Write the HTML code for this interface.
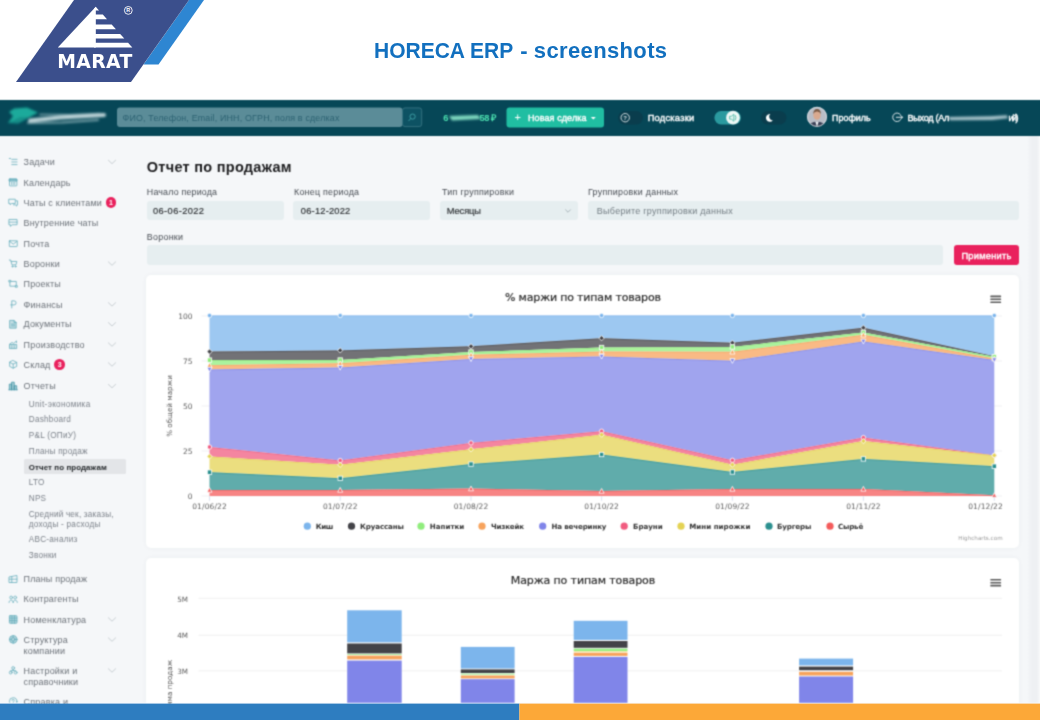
<!DOCTYPE html>
<html lang="ru">
<head>
<meta charset="utf-8">
<title>HORECA ERP - screenshots</title>
<style>
html,body{margin:0;padding:0;}
body{width:1040px;height:720px;overflow:hidden;background:#fff;position:relative;font-family:"Liberation Sans",sans-serif;}
.abs{position:absolute;}
.t{position:absolute;white-space:nowrap;line-height:1;}
.m{display:inline-block;width:0;height:0;}
#app{position:absolute;left:0;top:0;width:1040px;height:720px;filter:url(#soft);}
#shot{position:absolute;left:0;top:100px;width:1040px;height:604px;background:#f5f7f9;overflow:hidden;}
#nav{position:absolute;left:0;top:100px;width:1040px;height:35.5px;background:#064757;}
.card{position:absolute;background:#fff;border-radius:5px;box-shadow:0 0 5px rgba(40,50,70,0.05);}
.inp{position:absolute;background:#e6eef0;border-radius:3px;}
#blue{position:absolute;left:0;top:703px;width:520px;height:17px;background:#2e7dc0;}
#orange{position:absolute;left:520px;top:703px;width:520px;height:17px;background:#fca838;}
</style>
</head>
<body>
<svg width="0" height="0" style="position:absolute"><defs><filter id="soft" x="0" y="0" width="100%" height="100%" color-interpolation-filters="sRGB"><feConvolveMatrix order="3" kernelMatrix="1 3 1 3 9 3 1 3 1" divisor="25" edgeMode="duplicate" preserveAlpha="false"/></filter></defs></svg>
<!-- slide header -->
<svg class="abs" style="left:0;top:0" width="260" height="100" viewBox="0 0 260 100">
  <polygon points="189,0 204,0 158.5,64.5 143.5,64.5" fill="#2e86d2"/>
  <polygon points="74,0 189,0 131,82 16,82" fill="#3b4f8c"/>
  <polygon points="95.8,6.8 95.8,47.4 57.8,47.4" fill="#fff"/>
  <g fill="#fff">
   <polygon points="95.8,6.8 99.0,10.4 94,10.4 94,8.8"/>
   <polygon points="94,14.6 102.8,14.6 107.0,19.3 94,19.3"/>
   <polygon points="94,24.5 111.7,24.5 115.9,29.2 94,29.2"/>
   <polygon points="94,33.9 120.2,33.9 124.3,38.5 94,38.5"/>
   <polygon points="94,42.7 128.1,42.7 132.3,47.4 94,47.4"/>
  </g>
  <circle cx="128.3" cy="10.4" r="3.9" fill="none" stroke="#fff" stroke-width="0.9"/>
  <text x="128.3" y="12.3" font-size="5.4" font-weight="700" fill="#fff" text-anchor="middle" font-family="Liberation Sans, sans-serif">R</text>
</svg>

<div id="app">
<div id="shot"></div>
<div id="nav"></div>
<div class="abs" style="left:1027.5px;top:135.5px;width:11px;height:568px;background:linear-gradient(90deg,#f3f5f7,#eef0f3 40%,#eef0f3 80%,#f4f5f7)"></div>
<div class="abs" style="left:1038.5px;top:135.5px;width:1.5px;height:568px;background:#f8f9fa"></div>

<svg class="abs" style="left:0;top:100px" width="1040" height="36" viewBox="0 100 1040 36">
<defs><filter id="bl" x="-20%" y="-50%" width="140%" height="200%"><feGaussianBlur stdDeviation="1.6"/></filter><filter id="bl2" x="-20%" y="-80%" width="140%" height="260%"><feGaussianBlur stdDeviation="1.1"/></filter><filter id="bl3" x="-20%" y="-100%" width="140%" height="300%"><feGaussianBlur stdDeviation="0.8"/></filter><clipPath id="avc"><circle cx="817" cy="116.8" r="9.6"/></clipPath></defs>
<g filter="url(#bl2)"><path d="M14,108.5 L27,107.5 L38,112.5 L30,117 L20,122 L8,123 L13,116 L9,112 Z" fill="#1fb5a2" opacity="0.9"/><path d="M8,123 L20,117 L30,117 L18,124 Z" fill="#128a86" opacity="0.8"/></g><g filter="url(#bl3)" stroke-linecap="round" fill="none"><path d="M30,120.5 L60,117.5 L104,115" stroke="#dbeaec" stroke-width="4" opacity="0.85"/><path d="M40,114.5 L70,114.8 L100,113.5" stroke="#b5d0d4" stroke-width="1.6" opacity="0.7"/><path d="M28,123 L62,122.6 L98,120" stroke="#a9c9cd" stroke-width="2" opacity="0.7"/></g>
<rect x="117" y="107.5" width="285.5" height="19.5" rx="3" fill="#5b8c98"/>
<rect x="402.5" y="107.9" width="19.2" height="18.7" rx="2.5" fill="#0d5263" stroke="#3d7886" stroke-width="0.8"/>
<circle cx="412.6" cy="116.6" r="2.6" fill="none" stroke="#3fa3a8" stroke-width="0.9"/><path d="M410.7,118.6 L408.8,120.7" stroke="#3fa3a8" stroke-width="0.9" stroke-linecap="round"/>
<g filter="url(#bl2)"><path d="M449,116 L478,115 L481,119 L452,120.5 Z" fill="#7fd9c0"/></g>
<rect x="506.5" y="107.5" width="97.5" height="20" rx="3" fill="#20bea2"/>
<path d="M590.8,116.9 h5 l-2.5,2.6 z" fill="#fff"/>
<rect x="618" y="111" width="25" height="13.4" rx="6.7" fill="#0a3d4d"/>
<circle cx="625.2" cy="117.7" r="4.2" fill="none" stroke="#d5e0e3" stroke-width="1"/>
<text x="625.2" y="119.8" font-size="6" font-weight="700" fill="#d5e0e3" text-anchor="middle" font-family="Liberation Sans, sans-serif">?</text>
<rect x="714.4" y="111" width="26.5" height="13.4" rx="6.7" fill="#2a9a9f"/>
<circle cx="733" cy="117.7" r="6.9" fill="#eef8f6"/>
<path d="M729.6,116.3 h1.8 l2.4,-2.1 v7 l-2.4,-2.1 h-1.8 z" fill="none" stroke="#3cb39c" stroke-width="0.8" stroke-linejoin="round"/><path d="M735.3,115.4 q1.6,2.3 0,4.6" fill="none" stroke="#3cb39c" stroke-width="0.8" stroke-linecap="round"/>
<rect x="761" y="111" width="25.5" height="13.4" rx="6.7" fill="#0a3d4d"/>
<path d="M770.3,114 a3.9,3.9 0 1 0 2.5,6.4 a3.7,3.7 0 0 1 -2.5,-6.4 z" fill="#fff"/>
<circle cx="817" cy="116.8" r="9.8" fill="#c9ccd2"/>
<g clip-path="url(#avc)"><rect x="806" y="106" width="22" height="22" fill="#b9bdc6"/><ellipse cx="817" cy="127.5" rx="8.5" ry="6" fill="#3a3f55"/><path d="M815.3,121.5 L817,127 L818.7,121.5 Z" fill="#eef0f3"/><ellipse cx="817" cy="115.2" rx="3.7" ry="4.6" fill="#d9a98f"/><path d="M813.1,114 q0.6,-5 3.9,-5 q3.6,0 4,5 q-1.5,-2.8 -4,-2.6 q-2.5,-0.2 -3.9,2.6 z" fill="#7a5a45"/></g>
<circle cx="817" cy="116.8" r="9.6" fill="none" stroke="#dfe3e8" stroke-width="0.8"/>
<path d="M900.4,114.6 a4.3,4.3 0 1 0 0,5.4" fill="none" stroke="#e8eef0" stroke-width="0.95" stroke-linecap="round"/><path d="M896.3,117.3 h6.2 m-1.9,-1.9 l1.9,1.9 l-1.9,1.9" fill="none" stroke="#e8eef0" stroke-width="0.95" stroke-linecap="round" stroke-linejoin="round"/>
<g filter="url(#bl2)"><path d="M948,117 L990,116.3 L1007,115.2 L1008,118.2 L992,120 L950,120.2 Z" fill="#a9c4cb"/></g>
</svg>
<div class="abs" style="left:23.7px;top:458.7px;width:102.5px;height:15.6px;background:#e3e5e8;border-radius:1.5px"></div>
<div class="abs" style="left:105.7px;top:197.4px;width:10.6px;height:10.6px;border-radius:50%;background:#e9215d"></div>
<div class="abs" style="left:54.3px;top:359.2px;width:10.6px;height:10.6px;border-radius:50%;background:#e9215d"></div>
<svg class="abs" style="left:0;top:140px" width="135" height="564" viewBox="0 140 135 564" fill="none" stroke="#66aebc" stroke-width="0.9" stroke-linecap="round" stroke-linejoin="round">
<path d="M108.4,160.3 L112,163.7 L115.6,160.3" stroke="#c3c9ce" stroke-width="0.9"/>
<path d="M108.4,261.9 L112,265.3 L115.6,261.9" stroke="#c3c9ce" stroke-width="0.9"/>
<path d="M108.4,302.7 L112,306.1 L115.6,302.7" stroke="#c3c9ce" stroke-width="0.9"/>
<path d="M108.4,322.6 L112,326.0 L115.6,322.6" stroke="#c3c9ce" stroke-width="0.9"/>
<path d="M108.4,342.9 L112,346.3 L115.6,342.9" stroke="#c3c9ce" stroke-width="0.9"/>
<path d="M108.4,362.8 L112,366.2 L115.6,362.8" stroke="#c3c9ce" stroke-width="0.9"/>
<path d="M108.4,384.4 L112,387.8 L115.6,384.4" stroke="#c3c9ce" stroke-width="0.9"/>
<path d="M108.4,617.8 L112,621.2 L115.6,617.8" stroke="#c3c9ce" stroke-width="0.9"/>
<path d="M108.4,637.9 L112,641.3 L115.6,637.9" stroke="#c3c9ce" stroke-width="0.9"/>
<path d="M108.4,668.8 L112,672.2 L115.6,668.8" stroke="#c3c9ce" stroke-width="0.9"/>
<g transform="translate(8.6,157.4) scale(0.88)" ><path d="M0.8,1.2h1.4 M3.6,2.2h6 M3.6,5.2h6 M3.6,8.2h6"/></g>
<g transform="translate(8.6,177.8) scale(0.88)" ><rect x="1" y="1.4" width="8.4" height="7.8" rx="0.5"/><rect x="1" y="1.4" width="8.4" height="2.4" fill="#66aebc" fill-opacity="0.7"/><path d="M3.4,5.2v2.4 M5.2,5.2v2.4 M7,5.2v2.4" stroke-width="0.8"/></g>
<g transform="translate(8.6,198.0) scale(0.88)" ><path d="M0.6,1.4h7v4.8h-4.2l-1.6,1.5v-1.5h-1.2z"/><path d="M8.6,3.2h1.6v4.6h-1v1.4l-1.5,-1.4h-2.2"/></g>
<g transform="translate(8.6,218.4) scale(0.88)" ><path d="M0.8,1.2h8.8v6h-5.6l-2,1.8v-1.8h-1.2z M0.8,4.2h8.8"/></g>
<g transform="translate(8.6,239.2) scale(0.88)" ><rect x="0.8" y="1.8" width="9" height="6.6" rx="0.6"/><path d="M0.8,2.2l4.5,3.4l4.5,-3.4"/></g>
<g transform="translate(8.6,259.0) scale(0.88)" ><path d="M0.8,1.2h1.6l1.4,5.4h4.6l1,-3.8h-6.4"/><circle cx="4.4" cy="8.4" r="0.7"/><circle cx="7.8" cy="8.4" r="0.7"/></g>
<g transform="translate(8.6,279.4) scale(0.88)" ><rect x="1.9" y="2.3" width="6.8" height="5.4"/><rect x="0.7" y="1.1" width="1.8" height="1.8" fill="#f5f7f9"/><rect x="8.1" y="7.1" width="1.8" height="1.8" fill="#f5f7f9"/></g>
<g transform="translate(8.6,299.8) scale(0.88)" ><path d="M3.6,9.2v-8h2.6a2.3,2.3 0 0 1 0,4.6h-3.8"/></g>
<g transform="translate(8.6,319.7) scale(0.88)" ><path d="M1.6,0.8h4.6l2.4,2.4v6.4h-7z" fill="#66aebc" fill-opacity="0.35"/><path d="M6.2,0.8v2.4h2.4 M3.2,5h3.8 M3.2,7h3.8"/></g>
<g transform="translate(8.6,340.0) scale(0.88)" ><path d="M1,9.3v-4.2h8.2v4.2z" fill="#66aebc" fill-opacity="0.25"/><path d="M3.6,9.3v-3 M6.4,9.3v-3" stroke-width="0.7"/><path d="M1.2,4.6l2.6,-1.8l2,1l3.2,-2.8v2"/></g>
<g transform="translate(8.6,359.9) scale(0.88)" ><path d="M5.2,0.8l4,2v4.6l-4,2l-4,-2v-4.6z M1.2,2.8l4,2l4,-2 M5.2,4.8v4.6"/></g>
<g transform="translate(8.6,381.5) scale(0.88)" ><path d="M0.8,9.4v-6.4h2.6v6.4 M3.4,9.4v-8.6h3v8.6 M6.4,9.4v-4.6h2.8v4.6 M0.3,9.4h9.6" fill="#66aebc" fill-opacity="0.55" stroke="#3f93a5"/></g>
<g transform="translate(8.6,574.6) scale(0.88)" ><path d="M0.9,2.6l8.6,-1.6v8h-8.6z M0.9,5.2h8.6 M3.6,2.2v6.8"/></g>
<g transform="translate(8.6,594.7) scale(0.88)" ><circle cx="2.9" cy="3.2" r="1.6"/><circle cx="7.5" cy="3.2" r="1.6"/><path d="M0.5,8.8c0,-3.6 4.8,-3.6 4.8,0 M5.1,8.8c0,-3.6 4.8,-3.6 4.8,0"/></g>
<g transform="translate(8.6,614.9) scale(0.88)" ><rect x="0.9" y="0.9" width="8.6" height="8.6" rx="0.7" fill="#66aebc" fill-opacity="0.45"/><path d="M0.9,3.7h8.6 M0.9,6.5h8.6 M3.8,0.9v8.6 M6.6,0.9v8.6"/></g>
<g transform="translate(8.6,635.0) scale(0.88)" ><circle cx="5.2" cy="5" r="4.3" fill="#66aebc" fill-opacity="0.45"/><circle cx="5.2" cy="5" r="2"/><path d="M5.2,0.7v2.3 M5.2,7v2.3 M0.9,5h2.3 M7.2,5h2.3"/></g>
<g transform="translate(8.6,665.9) scale(0.88)" ><circle cx="5.2" cy="2.4" r="1.6"/><circle cx="2.4" cy="7.6" r="1.6"/><circle cx="8" cy="7.6" r="1.6"/><path d="M5.2,4v1.4 M2.4,6v-0.6h5.6v0.6"/></g>
<g transform="translate(8.6,697.1) scale(0.88)" ><circle cx="5.2" cy="5" r="4.3"/><path d="M3.9,3.8a1.3,1.3 0 1 1 1.9,1.2c-0.5,0.3 -0.6,0.6 -0.6,1.1 M5.2,7.6v0.1"/></g>
</svg>
<div class="inp" style="left:146.5px;top:201px;width:137px;height:18.8px"></div>
<div class="inp" style="left:292.8px;top:201px;width:137.2px;height:18.8px"></div>
<div class="inp" style="left:439.7px;top:201px;width:138.2px;height:18.8px"></div>
<div class="inp" style="left:588px;top:201px;width:431.4px;height:18.8px"></div>
<div class="inp" style="left:146.5px;top:245.3px;width:796.4px;height:19.6px"></div>
<div class="abs" style="left:953.9px;top:244.9px;width:65.5px;height:20.4px;background:#e9215d;border-radius:3px"></div>
<svg class="abs" style="left:563px;top:206px" width="10" height="10" viewBox="0 0 10 10"><path d="M2.6,3.8 L5,6.2 L7.4,3.8" fill="none" stroke="#a4b0b5" stroke-width="0.9" stroke-linecap="round" stroke-linejoin="round"/></svg>
<div class="card" style="left:146.3px;top:275px;width:872.5px;height:272.7px;"></div>
<div class="card" style="left:146.3px;top:557.8px;width:872.5px;height:160px;"></div>
<svg class="abs" style="left:0;top:0" width="1040" height="720" viewBox="0 0 1040 720">
<line x1="201.5" y1="316" x2="1002" y2="316" stroke="#e9e9ee" stroke-width="0.7"/>
<line x1="201.5" y1="361" x2="1002" y2="361" stroke="#e9e9ee" stroke-width="0.7"/>
<line x1="201.5" y1="406" x2="1002" y2="406" stroke="#e9e9ee" stroke-width="0.7"/>
<line x1="201.5" y1="451" x2="1002" y2="451" stroke="#e9e9ee" stroke-width="0.7"/>
<line x1="201.5" y1="496" x2="1002" y2="496" stroke="#e9e9ee" stroke-width="0.7"/>
<polygon points="209.5,315.5 340.2,315.5 471.0,315.5 601.6,315.5 732.4,315.5 863.4,315.5 994.3,315.5 994.3,356.3 863.4,327.7 732.4,342.8 601.6,338.2 471.0,346.3 340.2,350.4 209.5,351.6" fill="#9dc8f1"/>
<polyline points="209.5,316.0 340.2,316.0 471.0,316.0 601.6,316.0 732.4,316.0 863.4,316.0 994.3,316.0" fill="none" stroke="#7cb5ec" stroke-opacity="0.55" stroke-width="1"/>
<polygon points="209.5,351.6 340.2,350.4 471.0,346.3 601.6,338.2 732.4,342.8 863.4,327.7 994.3,356.3 994.3,356.8 863.4,332.4 732.4,346.9 601.6,347.5 471.0,352.0 340.2,360.0 209.5,360.1" fill="#727276"/>
<polyline points="209.5,352.1 340.2,350.9 471.0,346.8 601.6,338.7 732.4,343.3 863.4,328.2 994.3,356.8" fill="none" stroke="#434348" stroke-opacity="0.55" stroke-width="1"/>
<polygon points="209.5,360.1 340.2,360.0 471.0,352.0 601.6,347.5 732.4,346.9 863.4,332.4 994.3,356.8 994.3,358.6 863.4,334.8 732.4,351.8 601.6,351.6 471.0,354.8 340.2,363.3 209.5,365.2" fill="#acf29e"/>
<polyline points="209.5,360.6 340.2,360.5 471.0,352.5 601.6,348.0 732.4,347.4 863.4,332.9 994.3,357.3" fill="none" stroke="#90ed7d" stroke-opacity="0.55" stroke-width="1"/>
<polygon points="209.5,365.2 340.2,363.3 471.0,354.8 601.6,351.6 732.4,351.8 863.4,334.8 994.3,358.6 994.3,360.0 863.4,341.4 732.4,360.8 601.6,356.5 471.0,359.0 340.2,367.6 209.5,369.5" fill="#f9ba85"/>
<polyline points="209.5,365.7 340.2,363.8 471.0,355.3 601.6,352.1 732.4,352.3 863.4,335.3 994.3,359.1" fill="none" stroke="#f7a35c" stroke-opacity="0.55" stroke-width="1"/>
<polygon points="209.5,369.5 340.2,367.6 471.0,359.0 601.6,356.5 732.4,360.8 863.4,341.4 994.3,360.0 994.3,455.4 863.4,437.6 732.4,460.3 601.6,431.2 471.0,442.9 340.2,460.5 209.5,447.0" fill="#a0a4ee"/>
<polyline points="209.5,370.0 340.2,368.1 471.0,359.5 601.6,357.0 732.4,361.3 863.4,341.9 994.3,360.5" fill="none" stroke="#8085e9" stroke-opacity="0.55" stroke-width="1"/>
<polygon points="209.5,447.0 340.2,460.5 471.0,442.9 601.6,431.2 732.4,460.3 863.4,437.6 994.3,455.4 994.3,455.4 863.4,441.1 732.4,464.7 601.6,434.7 471.0,449.3 340.2,464.8 209.5,456.4" fill="#f485a0"/>
<polyline points="209.5,447.5 340.2,461.0 471.0,443.4 601.6,431.7 732.4,460.8 863.4,438.1 994.3,455.9" fill="none" stroke="#f15c80" stroke-opacity="0.55" stroke-width="1"/>
<polygon points="209.5,456.4 340.2,464.8 471.0,449.3 601.6,434.7 732.4,464.7 863.4,441.1 994.3,455.4 994.3,466.2 863.4,458.9 732.4,472.0 601.6,454.5 471.0,464.1 340.2,478.3 209.5,472.2" fill="#ebde7f"/>
<polyline points="209.5,456.9 340.2,465.3 471.0,449.8 601.6,435.2 732.4,465.2 863.4,441.6 994.3,455.9" fill="none" stroke="#e4d354" stroke-opacity="0.55" stroke-width="1"/>
<polygon points="209.5,472.2 340.2,478.3 471.0,464.1 601.6,454.5 732.4,472.0 863.4,458.9 994.3,466.2 994.3,495.3 863.4,488.9 732.4,488.9 601.6,491.0 471.0,488.6 340.2,490.0 209.5,490.0" fill="#60acab"/>
<polyline points="209.5,472.7 340.2,478.8 471.0,464.6 601.6,455.0 732.4,472.5 863.4,459.4 994.3,466.7" fill="none" stroke="#2b908f" stroke-opacity="0.55" stroke-width="1"/>
<polygon points="209.5,490.0 340.2,490.0 471.0,488.6 601.6,491.0 732.4,488.9 863.4,488.9 994.3,495.3 994.3,496.0 863.4,496.0 732.4,496.0 601.6,496.0 471.0,496.0 340.2,496.0 209.5,496.0" fill="#f78484"/>
<polyline points="209.5,490.5 340.2,490.5 471.0,489.1 601.6,491.5 732.4,489.4 863.4,489.4 994.3,495.8" fill="none" stroke="#f45b5b" stroke-opacity="0.55" stroke-width="1"/>
<circle cx="209.5" cy="315.5" r="2.2" fill="#7cb5ec" stroke="#fff" stroke-width="0.8"/>
<circle cx="340.2" cy="315.5" r="2.2" fill="#7cb5ec" stroke="#fff" stroke-width="0.8"/>
<circle cx="471.0" cy="315.5" r="2.2" fill="#7cb5ec" stroke="#fff" stroke-width="0.8"/>
<circle cx="601.6" cy="315.5" r="2.2" fill="#7cb5ec" stroke="#fff" stroke-width="0.8"/>
<circle cx="732.4" cy="315.5" r="2.2" fill="#7cb5ec" stroke="#fff" stroke-width="0.8"/>
<circle cx="863.4" cy="315.5" r="2.2" fill="#7cb5ec" stroke="#fff" stroke-width="0.8"/>
<circle cx="994.3" cy="315.5" r="2.2" fill="#7cb5ec" stroke="#fff" stroke-width="0.8"/>
<polygon points="209.5,349.00000000000006 212.1,351.6 209.5,354.2 206.9,351.6" fill="#434348" stroke="#fff" stroke-width="0.8"/>
<polygon points="340.2,347.8 342.79999999999995,350.4 340.2,352.99999999999994 337.6,350.4" fill="#434348" stroke="#fff" stroke-width="0.8"/>
<polygon points="471.0,343.70000000000005 473.59999999999997,346.3 471.0,348.9 468.40000000000003,346.3" fill="#434348" stroke="#fff" stroke-width="0.8"/>
<polygon points="601.6,335.6 604.2,338.2 601.6,340.79999999999995 599.0,338.2" fill="#434348" stroke="#fff" stroke-width="0.8"/>
<polygon points="732.4,340.20000000000005 735.0,342.8 732.4,345.4 729.8,342.8" fill="#434348" stroke="#fff" stroke-width="0.8"/>
<polygon points="863.4,325.1 866.0,327.7 863.4,330.29999999999995 860.8,327.7" fill="#434348" stroke="#fff" stroke-width="0.8"/>
<polygon points="994.3,353.70000000000005 996.9,356.3 994.3,358.9 991.6999999999999,356.3" fill="#434348" stroke="#fff" stroke-width="0.8"/>
<rect x="207.3" y="357.90000000000003" width="4.4" height="4.4" fill="#90ed7d" stroke="#fff" stroke-width="0.8"/>
<rect x="338.0" y="357.8" width="4.4" height="4.4" fill="#90ed7d" stroke="#fff" stroke-width="0.8"/>
<rect x="468.8" y="349.8" width="4.4" height="4.4" fill="#90ed7d" stroke="#fff" stroke-width="0.8"/>
<rect x="599.4" y="345.3" width="4.4" height="4.4" fill="#90ed7d" stroke="#fff" stroke-width="0.8"/>
<rect x="730.1999999999999" y="344.7" width="4.4" height="4.4" fill="#90ed7d" stroke="#fff" stroke-width="0.8"/>
<rect x="861.1999999999999" y="330.2" width="4.4" height="4.4" fill="#90ed7d" stroke="#fff" stroke-width="0.8"/>
<rect x="992.0999999999999" y="354.6" width="4.4" height="4.4" fill="#90ed7d" stroke="#fff" stroke-width="0.8"/>
<polygon points="209.5,362.7 212.0,367.4 207.0,367.4" fill="#f7a35c" stroke="#fff" stroke-width="0.8"/>
<polygon points="340.2,360.8 342.7,365.5 337.7,365.5" fill="#f7a35c" stroke="#fff" stroke-width="0.8"/>
<polygon points="471.0,352.3 473.5,357.0 468.5,357.0" fill="#f7a35c" stroke="#fff" stroke-width="0.8"/>
<polygon points="601.6,349.1 604.1,353.8 599.1,353.8" fill="#f7a35c" stroke="#fff" stroke-width="0.8"/>
<polygon points="732.4,349.3 734.9,354.0 729.9,354.0" fill="#f7a35c" stroke="#fff" stroke-width="0.8"/>
<polygon points="863.4,332.3 865.9,337.0 860.9,337.0" fill="#f7a35c" stroke="#fff" stroke-width="0.8"/>
<polygon points="994.3,356.1 996.8,360.8 991.8,360.8" fill="#f7a35c" stroke="#fff" stroke-width="0.8"/>
<polygon points="209.5,372.0 212.0,367.3 207.0,367.3" fill="#8085e9" stroke="#fff" stroke-width="0.8"/>
<polygon points="340.2,370.1 342.7,365.40000000000003 337.7,365.40000000000003" fill="#8085e9" stroke="#fff" stroke-width="0.8"/>
<polygon points="471.0,361.5 473.5,356.8 468.5,356.8" fill="#8085e9" stroke="#fff" stroke-width="0.8"/>
<polygon points="601.6,359.0 604.1,354.3 599.1,354.3" fill="#8085e9" stroke="#fff" stroke-width="0.8"/>
<polygon points="732.4,363.3 734.9,358.6 729.9,358.6" fill="#8085e9" stroke="#fff" stroke-width="0.8"/>
<polygon points="863.4,343.9 865.9,339.2 860.9,339.2" fill="#8085e9" stroke="#fff" stroke-width="0.8"/>
<polygon points="994.3,362.5 996.8,357.8 991.8,357.8" fill="#8085e9" stroke="#fff" stroke-width="0.8"/>
<circle cx="209.5" cy="447.0" r="2.2" fill="#f15c80" stroke="#fff" stroke-width="0.8"/>
<circle cx="340.2" cy="460.5" r="2.2" fill="#f15c80" stroke="#fff" stroke-width="0.8"/>
<circle cx="471.0" cy="442.9" r="2.2" fill="#f15c80" stroke="#fff" stroke-width="0.8"/>
<circle cx="601.6" cy="431.2" r="2.2" fill="#f15c80" stroke="#fff" stroke-width="0.8"/>
<circle cx="732.4" cy="460.3" r="2.2" fill="#f15c80" stroke="#fff" stroke-width="0.8"/>
<circle cx="863.4" cy="437.6" r="2.2" fill="#f15c80" stroke="#fff" stroke-width="0.8"/>
<circle cx="994.3" cy="455.4" r="2.2" fill="#f15c80" stroke="#fff" stroke-width="0.8"/>
<polygon points="209.5,453.8 212.1,456.4 209.5,458.99999999999994 206.9,456.4" fill="#e4d354" stroke="#fff" stroke-width="0.8"/>
<polygon points="340.2,462.20000000000005 342.79999999999995,464.8 340.2,467.4 337.6,464.8" fill="#e4d354" stroke="#fff" stroke-width="0.8"/>
<polygon points="471.0,446.70000000000005 473.59999999999997,449.3 471.0,451.9 468.40000000000003,449.3" fill="#e4d354" stroke="#fff" stroke-width="0.8"/>
<polygon points="601.6,432.1 604.2,434.7 601.6,437.29999999999995 599.0,434.7" fill="#e4d354" stroke="#fff" stroke-width="0.8"/>
<polygon points="732.4,462.1 735.0,464.7 732.4,467.29999999999995 729.8,464.7" fill="#e4d354" stroke="#fff" stroke-width="0.8"/>
<polygon points="863.4,438.50000000000006 866.0,441.1 863.4,443.7 860.8,441.1" fill="#e4d354" stroke="#fff" stroke-width="0.8"/>
<polygon points="994.3,452.8 996.9,455.4 994.3,457.99999999999994 991.6999999999999,455.4" fill="#e4d354" stroke="#fff" stroke-width="0.8"/>
<rect x="207.3" y="470.0" width="4.4" height="4.4" fill="#2b908f" stroke="#fff" stroke-width="0.8"/>
<rect x="338.0" y="476.1" width="4.4" height="4.4" fill="#2b908f" stroke="#fff" stroke-width="0.8"/>
<rect x="468.8" y="461.90000000000003" width="4.4" height="4.4" fill="#2b908f" stroke="#fff" stroke-width="0.8"/>
<rect x="599.4" y="452.3" width="4.4" height="4.4" fill="#2b908f" stroke="#fff" stroke-width="0.8"/>
<rect x="730.1999999999999" y="469.8" width="4.4" height="4.4" fill="#2b908f" stroke="#fff" stroke-width="0.8"/>
<rect x="861.1999999999999" y="456.7" width="4.4" height="4.4" fill="#2b908f" stroke="#fff" stroke-width="0.8"/>
<rect x="992.0999999999999" y="464.0" width="4.4" height="4.4" fill="#2b908f" stroke="#fff" stroke-width="0.8"/>
<polygon points="209.5,487.5 212.0,492.2 207.0,492.2" fill="#f45b5b" stroke="#fff" stroke-width="0.8"/>
<polygon points="340.2,487.5 342.7,492.2 337.7,492.2" fill="#f45b5b" stroke="#fff" stroke-width="0.8"/>
<polygon points="471.0,486.1 473.5,490.8 468.5,490.8" fill="#f45b5b" stroke="#fff" stroke-width="0.8"/>
<polygon points="601.6,488.5 604.1,493.2 599.1,493.2" fill="#f45b5b" stroke="#fff" stroke-width="0.8"/>
<polygon points="732.4,486.4 734.9,491.09999999999997 729.9,491.09999999999997" fill="#f45b5b" stroke="#fff" stroke-width="0.8"/>
<polygon points="863.4,486.4 865.9,491.09999999999997 860.9,491.09999999999997" fill="#f45b5b" stroke="#fff" stroke-width="0.8"/>
<polygon points="994.3,492.8 996.8,497.5 991.8,497.5" fill="#f45b5b" stroke="#fff" stroke-width="0.8"/>
<line x1="209.5" y1="496.3" x2="209.5" y2="500.8" stroke="#ccd6eb" stroke-width="0.7"/>
<line x1="340.2" y1="496.3" x2="340.2" y2="500.8" stroke="#ccd6eb" stroke-width="0.7"/>
<line x1="471.0" y1="496.3" x2="471.0" y2="500.8" stroke="#ccd6eb" stroke-width="0.7"/>
<line x1="601.6" y1="496.3" x2="601.6" y2="500.8" stroke="#ccd6eb" stroke-width="0.7"/>
<line x1="732.4" y1="496.3" x2="732.4" y2="500.8" stroke="#ccd6eb" stroke-width="0.7"/>
<line x1="863.4" y1="496.3" x2="863.4" y2="500.8" stroke="#ccd6eb" stroke-width="0.7"/>
<line x1="994.3" y1="496.3" x2="994.3" y2="500.8" stroke="#ccd6eb" stroke-width="0.7"/>
<circle cx="307.3" cy="526.2" r="3.6" fill="#7cb5ec"/>
<circle cx="351.5" cy="526.2" r="3.6" fill="#434348"/>
<circle cx="421" cy="526.2" r="3.6" fill="#90ed7d"/>
<circle cx="482" cy="526.2" r="3.6" fill="#f7a35c"/>
<circle cx="542.7" cy="526.2" r="3.6" fill="#8085e9"/>
<circle cx="624.2" cy="526.2" r="3.6" fill="#f15c80"/>
<circle cx="681" cy="526.2" r="3.6" fill="#e4d354"/>
<circle cx="769" cy="526.2" r="3.6" fill="#2b908f"/>
<circle cx="830" cy="526.2" r="3.6" fill="#f45b5b"/>
<rect x="990.3" y="295.6" width="10.8" height="1.6" rx="0.5" fill="#5a5a5a"/>
<rect x="990.3" y="298.5" width="10.8" height="1.6" rx="0.5" fill="#5a5a5a"/>
<rect x="990.3" y="301.4" width="10.8" height="1.6" rx="0.5" fill="#5a5a5a"/>
<rect x="990.3" y="579.0" width="10.8" height="1.6" rx="0.5" fill="#5a5a5a"/>
<rect x="990.3" y="581.9" width="10.8" height="1.6" rx="0.5" fill="#5a5a5a"/>
<rect x="990.3" y="584.8" width="10.8" height="1.6" rx="0.5" fill="#5a5a5a"/>
<line x1="198.5" y1="598.3" x2="1002" y2="598.3" stroke="#ececec" stroke-width="0.8"/>
<line x1="198.5" y1="635.2" x2="1002" y2="635.2" stroke="#ececec" stroke-width="0.8"/>
<line x1="198.5" y1="670.9" x2="1002" y2="670.9" stroke="#ececec" stroke-width="0.8"/>
<rect x="347.2" y="610.3" width="54.5" height="32.0" fill="#7cb5ec"/>
<rect x="347.2" y="643.5" width="54.5" height="9.9" fill="#434348"/>
<rect x="347.2" y="654.2" width="54.5" height="0.7" fill="#90ed7d"/>
<rect x="347.2" y="655.6" width="54.5" height="3.8" fill="#f7a35c"/>
<rect x="347.2" y="660.6" width="54.5" height="43.4" fill="#8085e9"/>
<rect x="460.8" y="646.9" width="53.8" height="21.6" fill="#7cb5ec"/>
<rect x="460.8" y="669.4" width="53.8" height="3.6" fill="#434348"/>
<rect x="460.8" y="673.7" width="53.8" height="0.9" fill="#90ed7d"/>
<rect x="460.8" y="675.5" width="53.8" height="2.9" fill="#f7a35c"/>
<rect x="460.8" y="679.2" width="53.8" height="24.8" fill="#8085e9"/>
<rect x="573.7" y="620.8" width="53.8" height="19.1" fill="#7cb5ec"/>
<rect x="573.7" y="641.0" width="53.8" height="6.8" fill="#434348"/>
<rect x="573.7" y="648.7" width="53.8" height="2.2" fill="#90ed7d"/>
<rect x="573.7" y="651.5" width="53.8" height="0.6" fill="#e4d354"/>
<rect x="573.7" y="652.7" width="53.8" height="3.2" fill="#f7a35c"/>
<rect x="573.7" y="656.9" width="53.8" height="47.1" fill="#8085e9"/>
<rect x="799.1" y="658.6" width="54.0" height="6.8" fill="#7cb5ec"/>
<rect x="799.1" y="666.6" width="54.0" height="3.6" fill="#434348"/>
<rect x="799.1" y="671.8" width="54.0" height="3.7" fill="#f7a35c"/>
<rect x="799.1" y="676.5" width="54.0" height="27.5" fill="#8085e9"/>
<rect x="0" y="702.8" width="1040" height="2" fill="#f6f9fe"/>
</svg>
<span class="t" style="left:169.6px;top:405.8px;font-size:7.2px;color:#555;font-family:'DejaVu Sans',sans-serif;transform:translate(-50%,-50%) rotate(-90deg);">% общей маржи</span><span class="t" style="left:169.6px;top:688px;font-size:7.2px;color:#555;font-family:'DejaVu Sans',sans-serif;transform:translate(-50%,-50%) rotate(-90deg);">Сумма продаж</span>
<span class="t" style="font-size:8.9px;color:#2c6272;top:113.80px;letter-spacing:0.174px;left:122.5px;">ФИО,  Телефон, Email, ИНН, ОГРН, поля в сделках</span>
<span class="t" style="font-size:9.3px;color:#4be0b0;top:114.14px;font-weight:700;left:443.3px;">6</span>
<span class="t" style="font-size:9.3px;color:#4be0b0;top:114.14px;font-weight:700;letter-spacing:-0.379px;left:479.5px;">58 ₽</span>
<span class="t" style="font-size:11px;color:#ffffff;top:112.44px;left:514.5px;">+</span>
<span class="t" style="font-size:9.0px;color:#ffffff;top:114.03px;letter-spacing:0.098px;left:528px;-webkit-text-stroke:0.38px #fff;">Новая сделка</span>
<span class="t" style="font-size:9.3px;color:#ffffff;top:114.14px;letter-spacing:0.238px;left:647.7px;-webkit-text-stroke:0.38px #fff;">Подсказки</span>
<span class="t" style="font-size:8.9px;color:#ffffff;top:113.99px;letter-spacing:0.065px;left:832px;-webkit-text-stroke:0.38px #fff;">Профиль</span>
<span class="t" style="font-size:9.1px;color:#ffffff;top:114.06px;letter-spacing:-0.268px;left:907.4px;-webkit-text-stroke:0.38px #fff;">Выход (Ал</span>
<span class="t" style="font-size:9.1px;color:#ffffff;top:114.06px;letter-spacing:-1.602px;left:1008.5px;-webkit-text-stroke:0.38px #fff;">ий)</span>
<span class="t sb" style="font-size:9.0px;color:#6c7279;top:158.13px;letter-spacing:0.200px;left:23.5px;">Задачи</span>
<span class="t sb" style="font-size:9.0px;color:#6c7279;top:178.53px;letter-spacing:0.200px;left:23.5px;">Календарь</span>
<span class="t sb" style="font-size:9.0px;color:#6c7279;top:198.72px;letter-spacing:0.191px;left:23.5px;">Чаты с клиентами</span>
<span class="t sb" style="font-size:9.0px;color:#6c7279;top:219.13px;letter-spacing:0.188px;left:23.5px;">Внутренние чаты</span>
<span class="t sb" style="font-size:9.0px;color:#6c7279;top:239.93px;letter-spacing:0.200px;left:23.5px;">Почта</span>
<span class="t sb" style="font-size:9.0px;color:#6c7279;top:259.72px;letter-spacing:0.200px;left:23.5px;">Воронки</span>
<span class="t sb" style="font-size:9.0px;color:#6c7279;top:280.13px;letter-spacing:0.200px;left:23.5px;">Проекты</span>
<span class="t sb" style="font-size:9.0px;color:#6c7279;top:300.53px;letter-spacing:0.200px;left:23.5px;">Финансы</span>
<span class="t sb" style="font-size:9.0px;color:#6c7279;top:320.43px;letter-spacing:0.200px;left:23.5px;">Документы</span>
<span class="t sb" style="font-size:9.0px;color:#6c7279;top:340.72px;letter-spacing:0.219px;left:23.5px;">Производство</span>
<span class="t sb" style="font-size:9.0px;color:#6c7279;top:360.63px;letter-spacing:0.200px;left:23.5px;">Склад</span>
<span class="t sb" style="font-size:9.0px;color:#6c7279;top:382.22px;letter-spacing:0.200px;left:23.5px;">Отчеты</span>
<span class="t sb" style="font-size:9.0px;color:#6c7279;top:575.33px;letter-spacing:0.161px;left:23.5px;">Планы продаж</span>
<span class="t sb" style="font-size:9.0px;color:#6c7279;top:595.43px;letter-spacing:0.200px;left:23.5px;">Контрагенты</span>
<span class="t sb" style="font-size:9.0px;color:#6c7279;top:615.63px;letter-spacing:0.200px;left:23.5px;">Номенклатура</span>
<span class="t sb" style="font-size:9.0px;color:#6c7279;top:635.72px;letter-spacing:0.200px;left:23.5px;">Структура</span>
<span class="t sb" style="font-size:9.0px;color:#6c7279;top:646.83px;letter-spacing:0.200px;left:23.5px;">компании</span>
<span class="t sb" style="font-size:9.0px;color:#6c7279;top:666.63px;letter-spacing:0.200px;left:23.5px;">Настройки и</span>
<span class="t sb" style="font-size:9.0px;color:#6c7279;top:678.03px;letter-spacing:0.200px;left:23.5px;">справочники</span>
<span class="t sb" style="font-size:9.0px;color:#6c7279;top:697.83px;letter-spacing:0.200px;left:23.5px;">Справка и</span>
<span class="t sb" style="font-size:8.2px;color:#7c828a;top:400.69px;letter-spacing:0.319px;left:28.75px;">Unit-экономика</span>
<span class="t sb" style="font-size:8.2px;color:#7c828a;top:416.19px;letter-spacing:0.250px;left:28.75px;">Dashboard</span>
<span class="t sb" style="font-size:8.2px;color:#7c828a;top:432.44px;letter-spacing:0.250px;left:28.75px;">P&amp;L (ОПиУ)</span>
<span class="t sb" style="font-size:8.2px;color:#7c828a;top:447.69px;letter-spacing:0.250px;left:28.75px;">Планы продаж</span>
<span class="t sb" style="font-size:8.2px;color:#7c828a;top:479.44px;letter-spacing:0.250px;left:28.75px;">LTO</span>
<span class="t sb" style="font-size:8.2px;color:#7c828a;top:495.19px;letter-spacing:0.250px;left:28.75px;">NPS</span>
<span class="t sb" style="font-size:8.2px;color:#7c828a;top:511.19px;letter-spacing:0.199px;left:28.75px;">Средний чек, заказы,</span>
<span class="t sb" style="font-size:8.2px;color:#7c828a;top:521.19px;letter-spacing:0.250px;left:28.75px;">доходы - расходы</span>
<span class="t sb" style="font-size:8.2px;color:#7c828a;top:536.44px;letter-spacing:0.250px;left:28.75px;">ABC-анализ</span>
<span class="t sb" style="font-size:8.2px;color:#7c828a;top:552.44px;letter-spacing:0.250px;left:28.75px;">Звонки</span>
<span class="t" style="font-size:7.9px;color:#1f2326;top:463.58px;font-weight:700;letter-spacing:0.104px;left:28.75px;">Отчет по продажам</span>
<span class="t" style="font-size:7px;color:#fff;top:199.22px;font-weight:700;left:111.00px;transform:translateX(-50%);">1</span>
<span class="t" style="font-size:7px;color:#fff;top:361.11px;font-weight:700;left:59.60px;transform:translateX(-50%);">3</span>
<span class="t" style="font-size:14.5px;color:#1c1c1e;top:159.69px;font-weight:700;letter-spacing:0.278px;left:146.8px;">Отчет по продажам</span>
<span class="t" style="font-size:8.9px;color:#474c53;top:188.39px;letter-spacing:0.178px;left:146.8px;">Начало периода</span>
<span class="t" style="font-size:8.9px;color:#474c53;top:188.39px;letter-spacing:0.251px;left:294px;">Конец периода</span>
<span class="t" style="font-size:8.9px;color:#474c53;top:188.39px;letter-spacing:0.301px;left:442px;">Тип группировки</span>
<span class="t" style="font-size:8.9px;color:#474c53;top:188.39px;letter-spacing:0.307px;left:588px;">Группировки данных</span>
<span class="t" style="font-size:8.9px;color:#474c53;top:233.49px;letter-spacing:0.289px;left:146.8px;">Воронки</span>
<span class="t" style="font-size:9.3px;color:#2a2d30;top:207.14px;letter-spacing:0.382px;left:153px;-webkit-text-stroke:0.15px #2a2d30;">06-06-2022</span>
<span class="t" style="font-size:9.3px;color:#2a2d30;top:207.14px;letter-spacing:0.215px;left:300.8px;-webkit-text-stroke:0.15px #2a2d30;">06-12-2022</span>
<span class="t" style="font-size:9.3px;color:#2a2d30;top:207.14px;letter-spacing:-0.104px;left:446.8px;-webkit-text-stroke:0.15px #2a2d30;">Месяцы</span>
<span class="t" style="font-size:9px;color:#737d83;top:207.03px;letter-spacing:0.270px;left:596.8px;">Выберите группировки данных</span>
<span class="t" style="font-size:9.3px;color:#fff;top:251.53px;letter-spacing:0.244px;left:961.4px;-webkit-text-stroke:0.38px #fff;">Применить</span>
<span class="t" style="font-size:11px;color:#2b2b2b;top:292.42px;font-family:'DejaVu Sans','Liberation Sans',sans-serif;letter-spacing:-0.165px;left:582.92px;transform:translateX(-50%);-webkit-text-stroke:0.2px #2b2b2b;">% маржи по типам товаров</span>
<span class="t" style="font-size:7.5px;color:#5c5c5c;top:312.73px;font-family:'DejaVu Sans','Liberation Sans',sans-serif;left:192.50px;transform:translateX(-100%);">100</span>
<span class="t" style="font-size:7.5px;color:#5c5c5c;top:358.34px;font-family:'DejaVu Sans','Liberation Sans',sans-serif;left:192.50px;transform:translateX(-100%);">75</span>
<span class="t" style="font-size:7.5px;color:#5c5c5c;top:403.04px;font-family:'DejaVu Sans','Liberation Sans',sans-serif;left:192.50px;transform:translateX(-100%);">50</span>
<span class="t" style="font-size:7.5px;color:#5c5c5c;top:448.14px;font-family:'DejaVu Sans','Liberation Sans',sans-serif;left:192.50px;transform:translateX(-100%);">25</span>
<span class="t" style="font-size:7.5px;color:#5c5c5c;top:493.04px;font-family:'DejaVu Sans','Liberation Sans',sans-serif;left:192.50px;transform:translateX(-100%);">0</span>
<span class="t" style="font-size:7.5px;color:#5c5c5c;top:502.54px;font-family:'DejaVu Sans','Liberation Sans',sans-serif;letter-spacing:0.116px;left:209.56px;transform:translateX(-50%);">01/06/22</span>
<span class="t" style="font-size:7.5px;color:#5c5c5c;top:502.54px;font-family:'DejaVu Sans','Liberation Sans',sans-serif;letter-spacing:0.116px;left:340.26px;transform:translateX(-50%);">01/07/22</span>
<span class="t" style="font-size:7.5px;color:#5c5c5c;top:502.54px;font-family:'DejaVu Sans','Liberation Sans',sans-serif;letter-spacing:0.116px;left:471.06px;transform:translateX(-50%);">01/08/22</span>
<span class="t" style="font-size:7.5px;color:#5c5c5c;top:502.54px;font-family:'DejaVu Sans','Liberation Sans',sans-serif;letter-spacing:0.116px;left:601.66px;transform:translateX(-50%);">01/10/22</span>
<span class="t" style="font-size:7.5px;color:#5c5c5c;top:502.54px;font-family:'DejaVu Sans','Liberation Sans',sans-serif;letter-spacing:0.116px;left:732.46px;transform:translateX(-50%);">01/09/22</span>
<span class="t" style="font-size:7.5px;color:#5c5c5c;top:502.54px;font-family:'DejaVu Sans','Liberation Sans',sans-serif;letter-spacing:0.116px;left:863.46px;transform:translateX(-50%);">01/11/22</span>
<span class="t" style="font-size:7.5px;color:#5c5c5c;top:502.54px;font-family:'DejaVu Sans','Liberation Sans',sans-serif;letter-spacing:0.116px;left:985.56px;transform:translateX(-50%);">01/12/22</span>
<span class="t" style="font-size:7.1px;color:#333;top:522.80px;font-weight:700;font-family:'DejaVu Sans','Liberation Sans',sans-serif;letter-spacing:-0.306px;left:315.7px;">Киш</span>
<span class="t" style="font-size:7.1px;color:#333;top:522.80px;font-weight:700;font-family:'DejaVu Sans','Liberation Sans',sans-serif;letter-spacing:-0.102px;left:360px;">Круассаны</span>
<span class="t" style="font-size:7.1px;color:#333;top:522.80px;font-weight:700;font-family:'DejaVu Sans','Liberation Sans',sans-serif;left:429.8px;">Напитки</span>
<span class="t" style="font-size:7.1px;color:#333;top:522.80px;font-weight:700;font-family:'DejaVu Sans','Liberation Sans',sans-serif;letter-spacing:-0.208px;left:491px;">Чизкейк</span>
<span class="t" style="font-size:7.1px;color:#333;top:522.80px;font-weight:700;font-family:'DejaVu Sans','Liberation Sans',sans-serif;letter-spacing:-0.143px;left:551.5px;">На вечеринку</span>
<span class="t" style="font-size:7.1px;color:#333;top:522.80px;font-weight:700;font-family:'DejaVu Sans','Liberation Sans',sans-serif;letter-spacing:-0.016px;left:633px;">Брауни</span>
<span class="t" style="font-size:7.1px;color:#333;top:522.80px;font-weight:700;font-family:'DejaVu Sans','Liberation Sans',sans-serif;letter-spacing:0.005px;left:689.3px;">Мини пирожки</span>
<span class="t" style="font-size:7.1px;color:#333;top:522.80px;font-weight:700;font-family:'DejaVu Sans','Liberation Sans',sans-serif;letter-spacing:-0.121px;left:777px;">Бургеры</span>
<span class="t" style="font-size:7.1px;color:#333;top:522.80px;font-weight:700;font-family:'DejaVu Sans','Liberation Sans',sans-serif;letter-spacing:-0.200px;left:838px;">Сырьё</span>
<span class="t" style="font-size:5.6px;color:#9a9a9a;top:535.75px;font-family:'DejaVu Sans','Liberation Sans',sans-serif;letter-spacing:0.019px;left:958.3px;">Highcharts.com</span>
<span class="t" style="font-size:11px;color:#2b2b2b;top:575.01px;font-family:'DejaVu Sans','Liberation Sans',sans-serif;letter-spacing:-0.106px;left:582.95px;transform:translateX(-50%);-webkit-text-stroke:0.2px #2b2b2b;">Маржа по типам товаров</span>
<span class="t" style="font-size:7.2px;color:#5c5c5c;top:596.03px;font-family:'DejaVu Sans','Liberation Sans',sans-serif;left:188.00px;transform:translateX(-100%);">5M</span>
<span class="t" style="font-size:7.2px;color:#5c5c5c;top:632.44px;font-family:'DejaVu Sans','Liberation Sans',sans-serif;left:188.00px;transform:translateX(-100%);">4M</span>
<span class="t" style="font-size:7.2px;color:#5c5c5c;top:668.22px;font-family:'DejaVu Sans','Liberation Sans',sans-serif;left:188.00px;transform:translateX(-100%);">3M</span>
</div>
<span class="t hd" style="font-size:22px;color:#1270bf;top:40.09px;font-weight:700;left:374.2px;transform:scaleX(0.955);transform-origin:0 50%;">HORECA ERP</span>
<span class="t hd" style="font-size:22px;color:#1270bf;top:40.09px;font-weight:700;left:520.3px;">-</span>
<span class="t hd" style="font-size:22px;color:#1270bf;top:40.09px;font-weight:700;letter-spacing:0.368px;left:533.8px;">screenshots</span>
<span class="t hd" style="font-size:18.8px;color:#ffffff;top:53.06px;font-weight:700;font-family:'DejaVu Sans',sans-serif;letter-spacing:0.405px;left:57.2px;">MARAT</span>
<svg class="abs" style="left:0;top:700px" width="1040" height="20" viewBox="0 700 1040 20"><rect x="0" y="703.6" width="519.4" height="17" fill="#2e7dc0"/><rect x="519.4" y="703.6" width="521" height="17" fill="#fca838"/></svg>
</body>
</html>
